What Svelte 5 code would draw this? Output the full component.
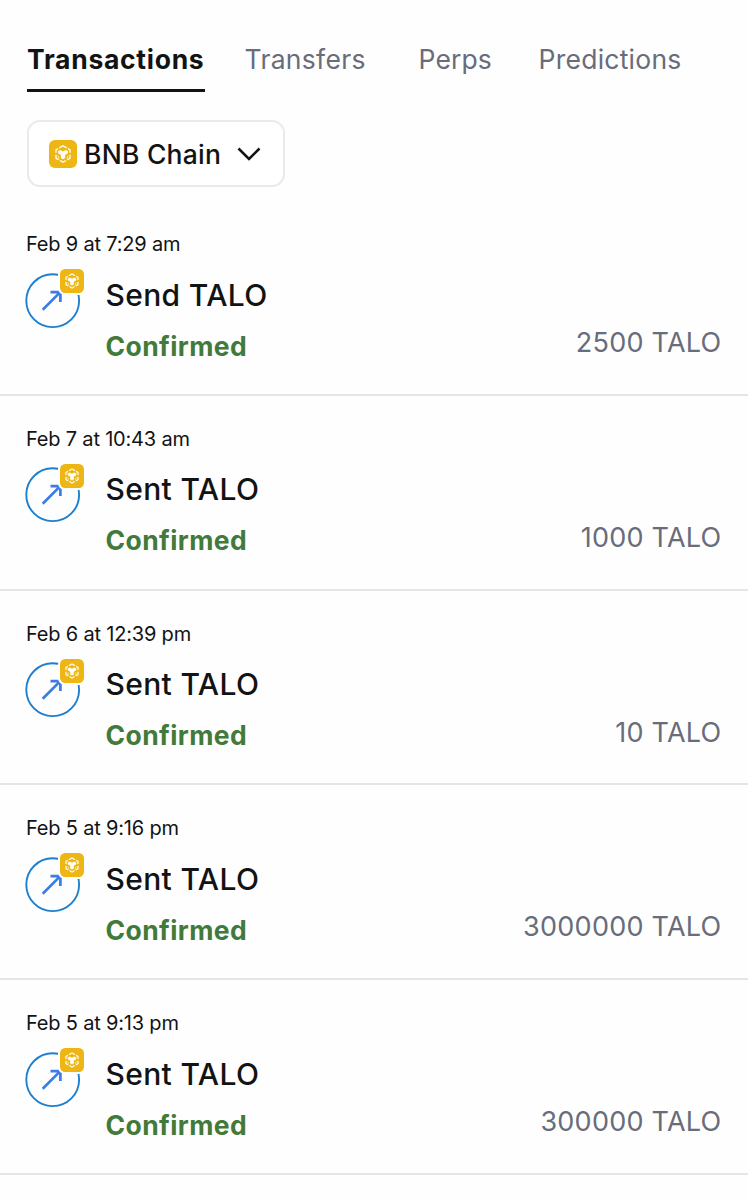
<script>
  const tabs = [
    { label: 'Transactions', active: true, w: 177.5, gap: 40, ls: 0.72 },
    { label: 'Transfers', w: 121, gap: 53, ls: 0.3 },
    { label: 'Perps', w: 73, gap: 47, ls: 0.1 },
    { label: 'Predictions', w: 143, gap: 0, ls: 0.25 }
  ];
  const rows = [
    { date: 'Feb 9 at 7:29 am', title: 'Send TALO', amount: '2500 TALO' },
    { date: 'Feb 7 at 10:43 am', title: 'Sent TALO', amount: '1000 TALO' },
    { date: 'Feb 6 at 12:39 pm', title: 'Sent TALO', amount: '10 TALO' },
    { date: 'Feb 5 at 9:16 pm', title: 'Sent TALO', amount: '3000000 TALO' },
    { date: 'Feb 5 at 9:13 pm', title: 'Sent TALO', amount: '300000 TALO' }
  ];
</script>

{#snippet chain()}
  <svg class="chain" viewBox="0 0 28 28">
    <rect width="28" height="28" rx="6" fill="#edb614" />
    <path
      d="M10.300 7.900 14 5.800l3.700 2.100M18.900 8.600l2.100 1.200v3M21 14.800v3.400l-2.700 1.600M17 20.500l-3 1.700-3-1.700M9.700 19.800 7 18.200v-3.400M7 12.800v-3l2.100-1.200"
      fill="none"
      stroke="#fffdf2"
      stroke-width="1.400"
    />
    <path d="M9 11.200 11.200 9.900 14 11.500l2.800-1.600L19 11.200v2l-2.900 1.700v3.200L14 19.300l-2.100-1.200v-3.200L9 13.200z" fill="#fffdf2" />
    <path d="M9.300 15.600v1.900l1.400.8M18.700 15.600v1.900l-1.400.8" fill="none" stroke="#fffdf2" stroke-width=".7" />
  </svg>
{/snippet}

<main>
  <nav>
    {#each tabs as t}
      <span class="tab" class:active={t.active} style="width:{t.w}px;margin-right:{t.gap}px;letter-spacing:{t.ls}px">{t.label}</span>
    {/each}
  </nav>
  <button class="network">
    {@render chain()}
    <span class="name">BNB Chain</span>
    <svg class="chevron" viewBox="0 0 24 14"><path d="M1.500 1.500 12 12 22.500 1.500" fill="none" stroke="#121314" stroke-width="2.500" /></svg>
  </button>
  {#each rows as r}
    <section>
      <div class="date">{r.date}</div>
      <div class="body">
        <div class="icon">
          <svg class="circle" viewBox="0 0 56 56">
            <circle cx="27.700" cy="27.700" r="26.400" fill="none" stroke="#1c7fd0" stroke-width="1.900" />
            <path d="M17.700 36.700 35 19.400M25.500 19.100H35.400V29" fill="none" stroke="#3b7de6" stroke-width="2.700" />
          </svg>
          <span class="badge">{@render chain()}</span>
        </div>
        <div class="info">
          <div class="title">{r.title}</div>
          <div class="status">Confirmed</div>
        </div>
        <div class="amount">{r.amount}</div>
      </div>
    </section>
  {/each}
</main>

<style>
  :global(body) { background: #fefefe; }
  main {
    width: 748px;
    height: 1200px;
    overflow: hidden;
    font-family: Inter, sans-serif;
    color: #121314;
  }
  nav { display: flex; padding: 28px 0 0 27px; height: 92px; box-sizing: border-box; }
  .tab {
    box-sizing: border-box;
    height: 64px;
    line-height: 62px;
    font-size: 26.500px;
    color: #686c7b;
    white-space: nowrap;
  }
  .active { font-weight: 700; color: #121314; border-bottom: 3px solid #121314; }
  .network {
    display: flex;
    align-items: center;
    box-sizing: border-box;
    width: 257.500px;
    height: 67px;
    margin: 28px 0 14px 27px;
    padding: 0 0 0 20px;
    border: 2px solid #e9e9ee;
    border-radius: 13px;
    background: #fff;
    font: inherit;
    color: inherit;
  }
  .chain { display: block; width: 28px; height: 28px; flex: none; }
  .name { width: 138px; margin-left: 7px; text-align: left; font-size: 26.500px; font-weight: 500; letter-spacing: 0.250px; line-height: 36px; white-space: nowrap; }
  .chevron { width: 24px; height: 14px; margin-left: 15px; }
  section {
    box-sizing: border-box;
    height: 194.800px;
    padding: 29px 27px 0 25px;
    border-bottom: 2px solid #e5e5e8;
  }
  .date { height: 28px; padding-left: 1px; line-height: 28px; font-size: 20px; letter-spacing: -0.190px; white-space: nowrap; }
  .body { display: flex; }
  .icon { position: relative; width: 56px; height: 56px; margin-top: 14.500px; }
  .circle { display: block; width: 56px; height: 56px; }
  .badge { position: absolute; left: 33.300px; top: -5.500px; padding: 2px; border-radius: 7px; background: #fefefe; }
  .badge .chain { width: 24px; height: 24px; }
  .info { margin: 16.600px 0 0 24.500px; white-space: nowrap; }
  .title { height: 40px; line-height: 40px; font-size: 30px; font-weight: 500; letter-spacing: 0.350px; }
  .status { height: 40px; margin-top: 11px; line-height: 40px; font-size: 26.500px; font-weight: 700; letter-spacing: 0.400px; color: #427a39; }
  .amount { margin: 65px -0.500px 0 auto; height: 40px; line-height: 40px; font-size: 27px; letter-spacing: 0.250px; color: #686c7b; white-space: nowrap; }
</style>
